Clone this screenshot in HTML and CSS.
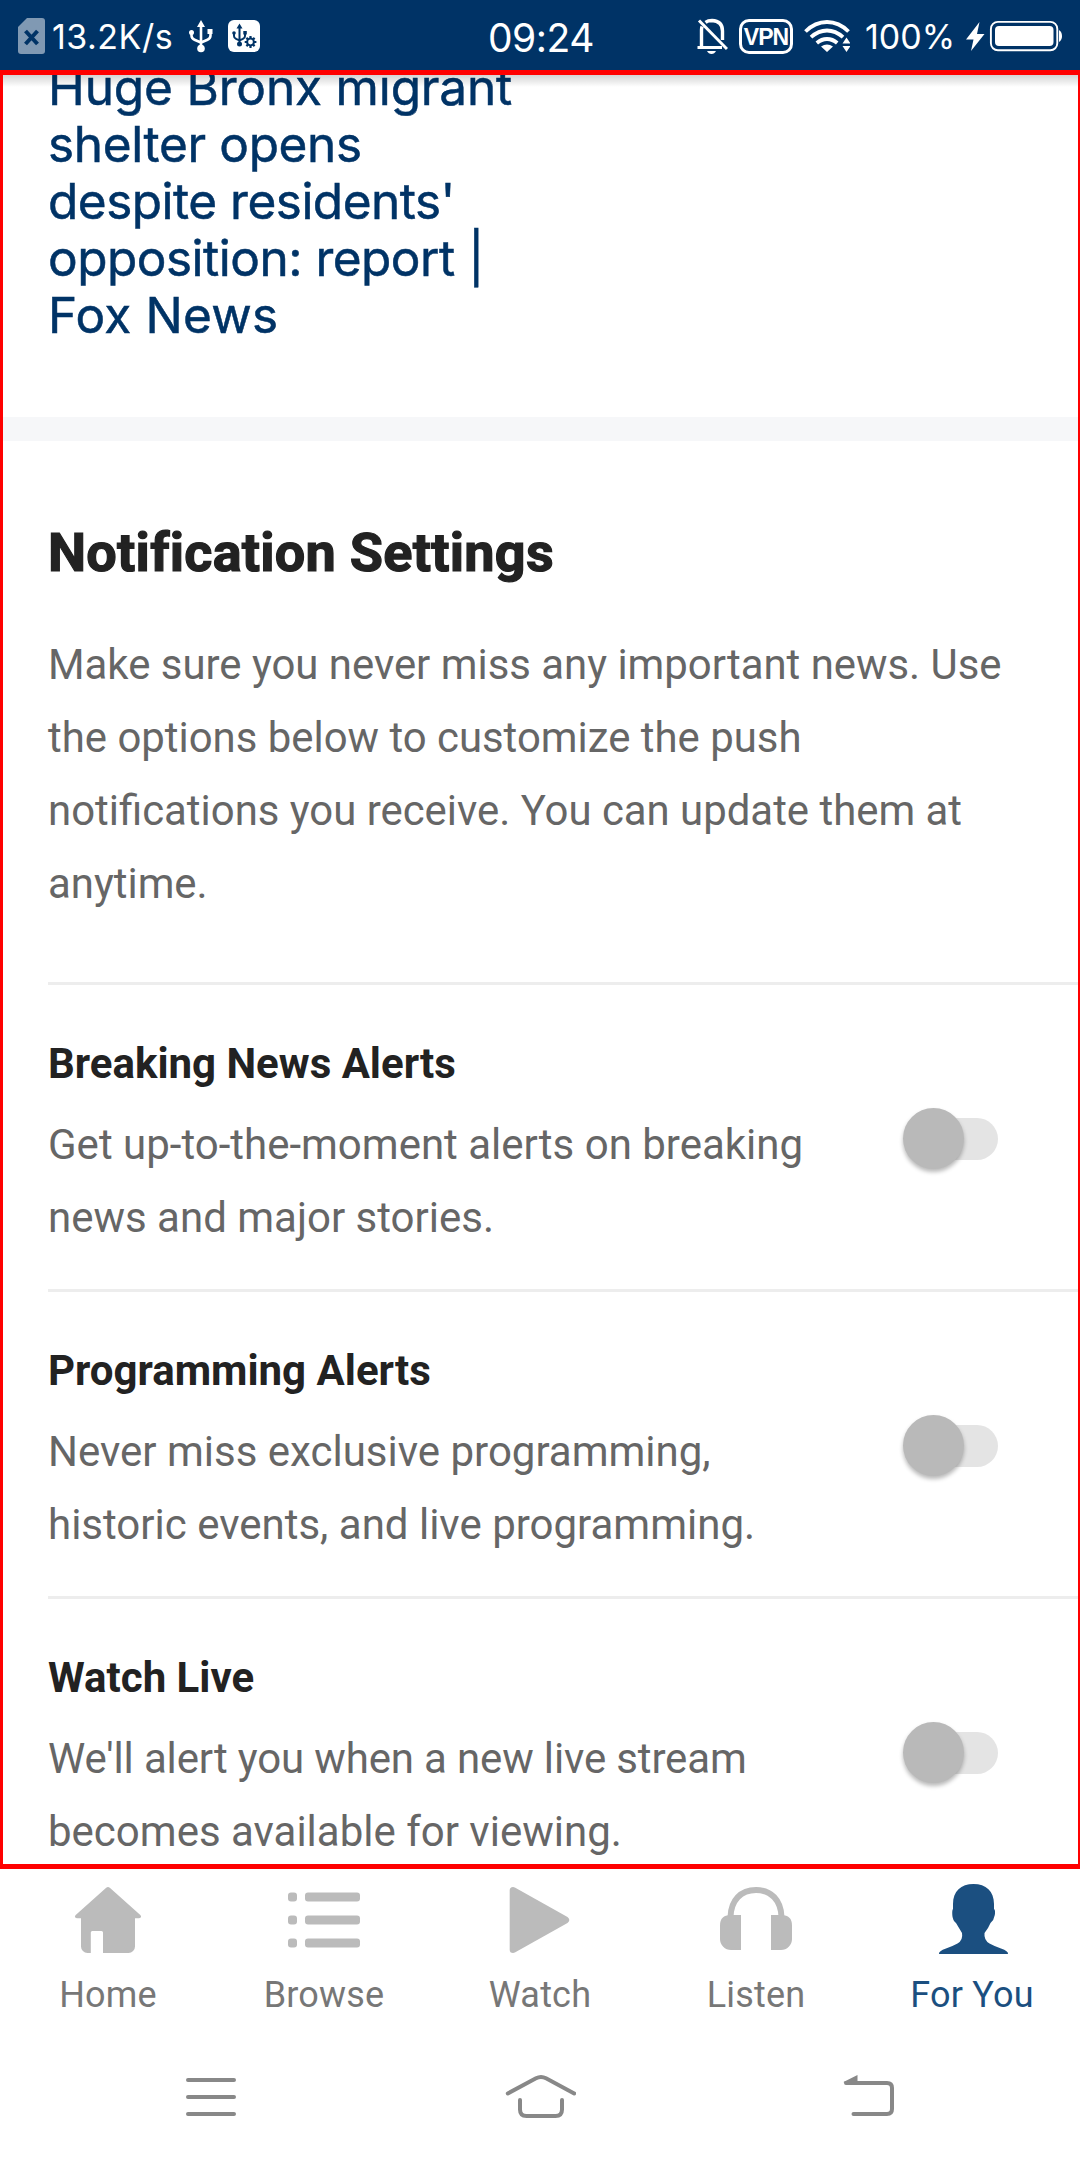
FILE: index.html
```html
<!DOCTYPE html>
<html lang="en">
<head>
<meta charset="utf-8">
<title>For You</title>
<link rel="stylesheet" href="styles.css">
</head>
<body>
<header class="status">
  <div class="status-group status-left">
    <svg class="sim" viewBox="18 0 28 70" width="28" height="70"><path d="M27 18h15a3 3 0 0 1 3 3v30a3 3 0 0 1-3 3H21a3 3 0 0 1-3-3V27z" fill="#8099b3"/><path d="M25.500 31l12 13M37.500 31l-12 13" stroke="#036" stroke-width="4"/></svg>
    <span class="speed">13.2K/s</span>
    <svg class="usb" viewBox="188 0 26 70" width="26" height="70"><g fill="none" stroke="#fff" stroke-width="2.600"><path d="M201 26v22M191.500 33v2.500q0 3 3 4.200l6.500 2.800 6.500-2.800q3-1.200 3-4.200V32"/></g><path d="M201 20l4 7h-8zM207.500 29h5v5h-5z" fill="#fff"/><circle cx="191.500" cy="32.500" r="2.500" fill="#fff"/><circle cx="201" cy="48.500" r="3.800" fill="#fff"/></svg>
    <svg class="usb-box" viewBox="228 0 32 70" width="32" height="70"><rect x="228" y="20" width="32" height="32" rx="6" fill="#fff"/><g fill="none" stroke="#036" stroke-width="2"><path d="M239.500 27v17M234 33v3q0 2 2 2.800l3.500 1.600 3.500-1.600q2-.8 2-2.800v-3"/><circle cx="250.500" cy="42" r="3.400"/><path d="M250.500 36v2.500M250.500 45.500V48M244.700 42h2.300M254 42h2.400M246.400 37.900l1.600 1.600M253 44.500l1.600 1.600M254.600 37.900L253 39.500M248 44.500l-1.600 1.600" stroke-width="2.200"/></g><path d="M239.500 23.500l3 5h-6zM243.300 31h3.500v3.500h-3.500z" fill="#036"/><circle cx="234" cy="33" r="1.800" fill="#036"/><circle cx="239.500" cy="44" r="2.500" fill="#036"/></svg>
  </div>
  <div class="clock">09:24</div>
  <div class="status-group status-right">
    <svg class="bell" viewBox="697 0 31 70" width="31" height="70"><g fill="none" stroke="#fff" stroke-width="3"><path d="M699 20.500l28 28.500"/><path d="M701.500 47V30q0-2 .6-3.500M705.500 22.300Q708 20.500 712 20.500q10.500.5 10.500 10.500V40" stroke-width="3.400"/><path d="M697.500 47.500h24.500"/></g><path d="M707 51h9q-1.500 3-4.500 3t-4.500-3z" fill="#fff"/></svg>
    <span class="vpn">VPN</span>
    <svg class="wifi" viewBox="804 0 46 70" width="46" height="70"><g fill="none" stroke="#fff" stroke-width="3.800"><path d="M805.500 31.500Q815 22 827 22t21.500 9.500M811 37.200Q818.500 30.500 827 30.500t16 6.700M816.800 43Q821.500 39 827 39t10.200 4"/></g><path d="M821 46.500q6-4 12 0l-6 5.500zM842.500 43.500l4-6 4 6zM842.500 46l4 6 4-6z" fill="#fff"/></svg>
    <span class="percent">100%</span>
    <svg class="battery" viewBox="966 0 98 70" width="98" height="70"><path d="M979.500 22L966 39.500h7.500L971 51l13.500-17H977z" fill="#fff"/><rect x="990.900" y="21.900" width="66.400" height="28.400" rx="7" fill="none" stroke="#fff" stroke-width="1.900"/><rect x="995" y="26" width="58.500" height="20" rx="4" fill="#fff"/><path d="M1059 30q3 2 3 6t-3 6z" fill="#fff"/></svg>
  </div>
</header>

<main class="content">
  <div class="bar-shadow"></div>
  <a class="headline"><span class="snug">Huge Bronx migrant</span><br><span class="tight">shelter opens</span><br><span class="tighter">despite residents'</span><br><span class="tighter">opposition: report |</span><br><span class="loose">Fox News</span></a>
  <section class="settings">
    <h1 class="title">Notification Settings</h1>
    <p class="intro">Make sure you never miss any important news. Use<br>the options below to customize the push<br>notifications you receive. You can update them at<br>anytime.</p>
    <div class="row">
      <div class="row-text">
        <h2 class="row-title">Breaking News Alerts</h2>
        <p class="row-desc">Get up-to-the-moment alerts on breaking<br>news and major stories.</p>
      </div>
      <div class="switch"><span class="thumb"></span></div>
    </div>
    <div class="row">
      <div class="row-text">
        <h2 class="row-title">Programming Alerts</h2>
        <p class="row-desc">Never miss exclusive programming,<br>historic events, and live programming.</p>
      </div>
      <div class="switch"><span class="thumb"></span></div>
    </div>
    <div class="row">
      <div class="row-text">
        <h2 class="row-title">Watch Live</h2>
        <p class="row-desc"><span class="snug">We'll alert you when a new live stream</span><br>becomes available for viewing.</p>
      </div>
      <div class="switch"><span class="thumb"></span></div>
    </div>
  </section>
</main>

<nav class="tabs">
  <a class="tab"><svg viewBox="0 0 80 80" width="80" height="80"><path d="M38.200 7.700q1.800-1.500 3.600 0L72.300 35q1.300 1.300.6 2.300t-2.200 1H67V66.500a6.500 6.500 0 0 1-6.500 6.500H35V52.500a1.500 1.500 0 0 0-1.500-1.500H24.300a1.500 1.500 0 0 0-1.500 1.500V73H19.500a6.500 6.500 0 0 1-6.500-6.500V38.300H9.300q-1.500 0-2.200-1T7.700 35z" fill="#bbb"/></svg><span class="tab-label">Home</span></a>
  <a class="tab"><svg viewBox="0 0 80 80" width="80" height="80"><g fill="#bbb"><rect x="4" y="12.500" width="9" height="9" rx="3"/><rect x="21" y="12.500" width="55" height="9" rx="3"/><rect x="4" y="35.500" width="9" height="9" rx="3"/><rect x="21" y="35.500" width="55" height="9" rx="3"/><rect x="4" y="58.500" width="9" height="9" rx="3"/><rect x="21" y="58.500" width="55" height="9" rx="3"/></g></svg><span class="tab-label">Browse</span></a>
  <a class="tab"><svg viewBox="0 0 80 80" width="80" height="80"><path d="M9.700 10.500q0-3.500 3.300-3.500 1 0 2.300.7L67.500 37q1.800 1.300 1.800 3t-1.800 3L15.300 72.300Q14 73 13 73q-3.300 0-3.300-3.500z" fill="#bbb"/></svg><span class="tab-label">Watch</span></a>
  <a class="tab"><svg viewBox="0 0 80 80" width="80" height="80"><path d="M14.500 37C15 20 25 10 40 10s25 10 25.500 27" fill="none" stroke="#bbb" stroke-width="6"/><path d="M25 35v35H15A11 11 0 0 1 4 59V45.500Q4 35 14.500 35zM55 35v35h10a11 11 0 0 0 11-11V45.500Q76 35 65.500 35z" fill="#bbb"/></svg><span class="tab-label">Listen</span></a>
  <a class="tab tab-active"><svg viewBox="0 0 80 80" width="80" height="80"><path d="M41.500 4C54 4 62 11 62 24v5q1.600 1 .8 6-.8 5-4.300 8l-2.500 5-3.500 5q-.8 7 5 10.500 4.500 2.500 11.500 5 7.500 2.500 7 5.500H7q-.5-3 7-5.500 7-2.500 11.500-5 5.800-3.500 4.500-10.500l-3-5-3-5q-3.500-3-3.700-8-.3-5 .7-6v-5C21 11 29 4 41.500 4z" fill="#1b4f80"/></svg><span class="tab-label">For You</span></a>
</nav>

<footer class="sysnav">
  <svg viewBox="186 2070 50 50" width="50" height="50"><path d="M188 2080h46M188 2097h46M188 2114h46" stroke="#888" stroke-width="4" stroke-linecap="round"/></svg>
  <svg viewBox="504 2070 72 50" width="72" height="50"><g fill="none" stroke="#888" stroke-width="4" stroke-linecap="round"><path d="M507.800 2093.500L536 2078.300q5-2.600 10 0l28.200 15.200M520 2100v9.500q0 6.500 6.500 6.500h29q6.500 0 6.500-6.500v-9.500"/></g></svg>
  <svg viewBox="843 2070 52 50" width="52" height="50"><path d="M846 2083h41q5 0 5 5v21q0 5-5 5h-33.500" fill="none" stroke="#888" stroke-width="4" stroke-linecap="round"/><path d="M843.500 2082l14-7v8h-13z" fill="#888"/></svg>
</footer>
</body>
</html>
```

FILE: styles.css
```css
* { box-sizing: border-box; margin: 0; padding: 0; }

body {
  width: 1080px;
  height: 2160px;
  overflow: hidden;
  display: flex;
  flex-direction: column;
  background: #fff;
  font-family: Roboto, sans-serif;
}

svg { display: block; flex: none; }

.status {
  height: 70px;
  flex: none;
  display: grid;
  grid-template-columns: 488px 104px 488px;
  background: #003366;
  color: #fff;
  font-family: Inter, sans-serif;
  line-height: 70px;
  white-space: nowrap;
}
.status-group { display: flex; }
.status-left { padding-left: 18px; }
.status-right { justify-content: flex-end; padding-right: 16px; }
.speed { width: 136px; margin-left: 6px; font-size: 34px; line-height: 74px; letter-spacing: 0.5px; }
.usb-box { margin-left: 14px; }
.clock { text-align: center; font-size: 39px; line-height: 75px; letter-spacing: -0.5px; }
.vpn {
  width: 54px;
  height: 35px;
  margin: 19px 11px 0;
  border: 3px solid #fff;
  border-radius: 10px;
  font-family: "Liberation Sans", sans-serif;
  font-size: 23px;
  font-weight: 700;
  line-height: 31px;
  text-align: center;
  letter-spacing: -1px;
}
.percent { width: 101px; padding-left: 15px; margin-right: 15px; font-size: 34px; line-height: 74px; }

.content {
  position: relative;
  height: 1799px;
  flex: none;
  overflow: hidden;
  border: solid #ff0000;
  border-width: 5px 2px 5px 3px;
}
.bar-shadow {
  position: absolute;
  inset: 0 0 auto 0;
  height: 12px;
  background: linear-gradient(rgba(0, 0, 0, 0.17), rgba(0, 0, 0, 0));
}
.headline {
  display: block;
  height: 358px;
  margin-top: -16px;
  padding-left: 45px;
  color: #003366;
  font-family: Inter, sans-serif;
  font-size: 49.5px;
  line-height: 57px;
  -webkit-text-stroke: 0.5px #003366;
}
.snug { letter-spacing: -0.15px; }
.tight { letter-spacing: -0.35px; }
.tighter { letter-spacing: -0.5px; }
.loose { letter-spacing: 0.2px; }
.settings {
  border-top: 24px solid #f6f7f9;
  padding-left: 45px;
}
.title {
  padding-top: 80px;
  color: #222;
  font-size: 54px;
  font-weight: 700;
  line-height: 64px;
  letter-spacing: 0.25px;
  font-variant-ligatures: common-ligatures;
  -webkit-text-stroke: 1.2px #222;
}
.intro {
  padding-top: 43px;
  height: 397px;
  color: #666;
  font-size: 41.9px;
  line-height: 73px;
}
.row {
  display: flex;
  justify-content: space-between;
  height: 307px;
  padding-right: 80px;
  border-top: 3px solid #ededed;
}
.row-title {
  padding-top: 54px;
  color: #222;
  font-size: 42px;
  font-weight: 700;
  line-height: 49px;
}
.row-desc {
  padding-top: 20px;
  color: #666;
  font-size: 42px;
  line-height: 73px;
}
.switch {
  width: 86px;
  height: 42px;
  margin-top: 133px;
  border-radius: 21px;
  background: #e4e4e4;
}
.thumb {
  display: block;
  width: 61px;
  height: 61px;
  margin: -10px 0 0 -9.500px;
  border-radius: 50%;
  background: #b9b9b9;
  box-shadow: 0 3px 4px rgba(0, 0, 0, 0.28);
}

.tabs {
  height: 171px;
  flex: none;
  display: grid;
  grid-template-columns: repeat(5, 1fr);
  padding-top: 11px;
}
.tab {
  display: flex;
  flex-direction: column;
  align-items: center;
  color: #777;
  font-size: 36px;
  line-height: 42px;
}
.tab-label { padding-top: 14px; letter-spacing: 0.2px; }
.tab-active { color: #1b4f80; }

.sysnav {
  height: 120px;
  display: flex;
  justify-content: space-between;
  padding: 30px 185px 0 186px;
}
```
